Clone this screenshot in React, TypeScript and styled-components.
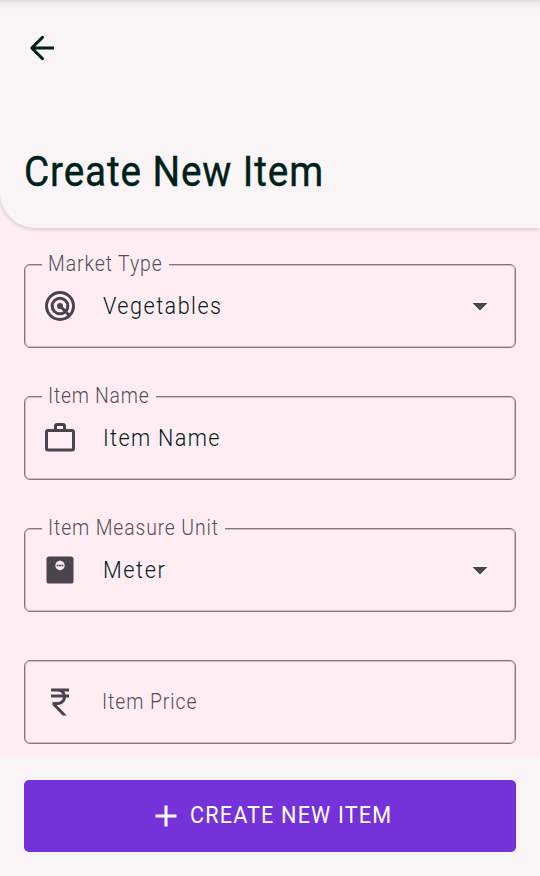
import React from "react";
import styled, { createGlobalStyle } from "styled-components";
import { MdAdd, MdArrowDropDown, MdCurrencyRupee } from "react-icons/md";

const GlobalStyle = createGlobalStyle`
  * { box-sizing: border-box; }
  body { margin: 0; background: #ffedf3; font-family: Roboto, "Liberation Sans", sans-serif; }
  button { font-family: inherit; }
`;

const Screen = styled.main`
  display: flex;
  flex-direction: column;
  width: 100%;
  height: 876px;
  overflow: hidden;
  background: #ffedf3;
`;

const Header = styled.header`
  flex: none;
  display: flex;
  flex-direction: column;
  justify-content: space-between;
  height: 228px;
  padding: 30px 25px 30px 24px;
  border-bottom-left-radius: 36px;
  background: linear-gradient(#dfdbdc 0, #ebe7e8 2px, #f4f0f1 5px, #f9f5f6 10px);
  box-shadow: 0 1px 4px rgba(60, 30, 45, 0.24);
`;

const IconButton = styled.button`
  display: flex;
  width: 36px;
  height: 36px;
  padding: 0;
  border: 0;
  background: none;
  color: #00201a;
`;

/* Condensed lettering: $squeeze narrows the glyphs, $track spaces them out. */
const Lettering = styled.span<{ $size: number; $squeeze: number; $track: number; $weight?: number }>`
  display: block;
  font-size: ${(p) => p.$size}px;
  font-weight: ${(p) => p.$weight ?? 400};
  letter-spacing: ${(p) => p.$track}px;
  line-height: 1.2;
  white-space: nowrap;
  transform: scaleX(${(p) => p.$squeeze});
  transform-origin: 0 50%;
`;

const Title = styled.h1`
  margin: 0;
  color: #00201a;
  font-weight: 400;
  -webkit-text-stroke: 0.4px #00201a;
`;

const Form = styled.form`
  flex: 1;
  display: flex;
  flex-direction: column;
  gap: 48px;
  min-height: 0;
  padding: 36px 24px 0;
`;

const Field = styled.div`
  position: relative;
  flex: none;
  display: flex;
  align-items: center;
  height: 84px;
  padding: 0 17px 0 17px;
  border: 1px solid #7f7981;
  border-radius: 6px;
  box-shadow: inset 0 0 0 1px rgba(127, 121, 129, 0.42);
  color: #49454f;
`;

const Notch = styled.span<{ $width: number }>`
  position: absolute;
  top: -14px;
  left: 17px;
  width: ${(p) => p.$width}px;
  height: 27px;
  padding-left: 6px;
  background: #ffedf3;
  color: #544d57;
`;

const Value = styled.span<{ $muted?: boolean }>`
  flex: 1;
  min-width: 0;
  padding-left: ${(p) => (p.$muted ? 24 : 25)}px;
  color: ${(p) => (p.$muted ? "#544d57" : "#00201a")};
`;

const Footer = styled.footer`
  flex: none;
  height: 120px;
  padding: 24px;
  background: #f9f5f6;
`;

const SubmitButton = styled.button`
  display: flex;
  align-items: center;
  width: 100%;
  height: 72px;
  padding: 0 0 0 124px;
  gap: 6px;
  border: 0;
  border-radius: 5px;
  background: #7532d9;
  color: #fff;
`;

const ButtonLabel = styled.span`
  padding-bottom: 2px;
`;

const BackIcon = () => (
  <svg width="36" height="36" viewBox="0 0 24 24" fill="none" stroke="currentColor" strokeWidth="2">
    <path d="M20 12H5.2" />
    <path d="M12.3 4.9L5.2 12l7.1 7.1" strokeLinecap="round" strokeLinejoin="round" />
  </svg>
);

const TargetIcon = () => (
  <svg width="36" height="36" viewBox="0 0 24 24" fill="none" stroke="currentColor" strokeWidth="2">
    <circle cx="12" cy="12" r="9" />
    <circle cx="12" cy="12" r="5.2" />
    <circle cx="12" cy="12" r="2" fill="currentColor" stroke="none" />
    <path d="M12 12l6.3 6.3" />
  </svg>
);

const CaseIcon = () => (
  <svg width="36" height="36" viewBox="0 0 24 24" fill="none" stroke="currentColor" strokeWidth="2">
    <rect x="3" y="7" width="18" height="13" rx="1" />
    <path d="M9 7V4a1 1 0 0 1 1-1h4a1 1 0 0 1 1 1v3" />
  </svg>
);

const ScaleIcon = () => (
  <svg width="36" height="36" viewBox="0 0 24 24" fill="currentColor">
    <rect x="3" y="3" width="18" height="18" rx="1.7" />
    <circle cx="12" cy="9" r="3.1" fill="#ffedf3" />
    <circle cx="10.4" cy="9" r=".7" />
    <circle cx="12" cy="9" r=".7" />
    <circle cx="13.6" cy="9" r=".7" />
  </svg>
);

export default function App() {
  return (
    <>
      <GlobalStyle />
      <Screen>
        <Header>
          <IconButton aria-label="Back"><BackIcon /></IconButton>
          <Title>
            <Lettering $size={43} $squeeze={0.9} $track={0.98}>Create New Item</Lettering>
          </Title>
        </Header>
        <Form>
          <Field>
            <Notch $width={127}><Lettering $size={21.5} $squeeze={0.9} $track={1.05} $weight={300}>Market Type</Lettering></Notch>
            <TargetIcon />
            <Value><Lettering $size={24} $squeeze={0.9} $track={1.65} $weight={300}>Vegetables</Lettering></Value>
            <MdArrowDropDown size={36} />
          </Field>
          <Field>
            <Notch $width={114}><Lettering $size={21.5} $squeeze={0.9} $track={0.85} $weight={300}>Item Name</Lettering></Notch>
            <CaseIcon />
            <Value><Lettering $size={24} $squeeze={0.9} $track={1.5} $weight={300}>Item Name</Lettering></Value>
          </Field>
          <Field>
            <Notch $width={183}><Lettering $size={21.5} $squeeze={0.9} $track={0.98} $weight={300}>Item Measure Unit</Lettering></Notch>
            <ScaleIcon />
            <Value><Lettering $size={24} $squeeze={0.9} $track={1.8} $weight={300}>Meter</Lettering></Value>
            <MdArrowDropDown size={36} />
          </Field>
          <Field>
            <MdCurrencyRupee size={36} />
            <Value $muted><Lettering $size={21.5} $squeeze={0.9} $track={1.05} $weight={300}>Item Price</Lettering></Value>
          </Field>
        </Form>
        <Footer>
          <SubmitButton>
            <MdAdd size={36} />
            <ButtonLabel>
              <Lettering $size={24} $squeeze={0.9} $track={1.3}>CREATE NEW ITEM</Lettering>
            </ButtonLabel>
          </SubmitButton>
        </Footer>
      </Screen>
    </>
  );
}
